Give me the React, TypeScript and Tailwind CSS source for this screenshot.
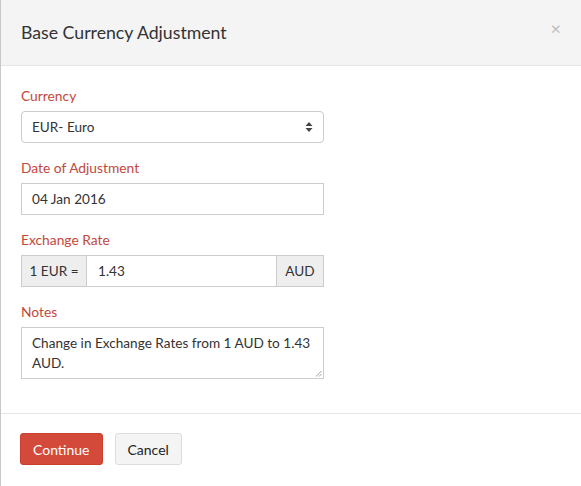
import React from 'react';

const labelCls = "block text-[13.8px] leading-4 text-[#c4473d] mb-[7px]";
const boxCls = "h-[32px] w-[303px] border border-[#ccc] bg-white text-[13.6px] text-[#333] px-[10px] flex items-center";

const App: React.FC = () => {
  return (
    <div className="w-[581px] h-[486px] bg-white border-l border-[#c8c8c8] font-['Lato','Open_Sans',sans-serif] text-[#333] flex flex-col">
      <div className="h-[66px] bg-[#f4f4f4] border-b border-[#e5e5e5] flex items-center justify-between pl-[20px] pr-[20px]">
        <h4 className="text-[17.7px] text-[#333] pt-[1px]">Base Currency Adjustment</h4>
        <span className="text-[18px] text-[#bbb] leading-none -mt-[9px]">×</span>
      </div>

      <div className="pl-[20px] pt-[22px] h-[348px] border-b border-[#e5e5e5] flex flex-col">
        <div>
          <label className={labelCls}>Currency</label>
          <div className={`${boxCls} rounded-[4px] justify-between`}>
            <span>EUR- Euro</span>
            <svg width="8" height="12" viewBox="0 0 8 12" className="text-[#444]">
              <path d="M4 1 L7.5 5 H0.5 Z" fill="currentColor" />
              <path d="M4 11 L7.5 7 H0.5 Z" fill="currentColor" />
            </svg>
          </div>
        </div>

        <div className="mt-[17px]">
          <label className={labelCls}>Date of Adjustment</label>
          <div className={boxCls}>04 Jan 2016</div>
        </div>

        <div className="mt-[17px]">
          <label className={labelCls}>Exchange Rate</label>
          <div className="flex h-[32px] w-[303px] border border-[#ccc] text-[13.6px]">
            <div className="w-[65px] bg-[#eee] border-r border-[#ccc] flex items-center justify-center">1 EUR =</div>
            <div className="flex-1 bg-white flex items-center px-[11px]">1.43</div>
            <div className="w-[47px] bg-[#eee] border-l border-[#ccc] flex items-center justify-center">AUD</div>
          </div>
        </div>

        <div className="mt-[17px]">
          <label className={labelCls}>Notes</label>
          <div className="relative w-[303px] h-[52px] border border-[#ccc] bg-white text-[13.6px] leading-[20px] px-[10px] py-[5px]">
            Change in Exchange Rates from 1 AUD to 1.43 AUD.
            <svg width="7" height="7" viewBox="0 0 7 7" className="absolute right-[1px] bottom-[1px] text-[#888]">
              <path d="M6.5 1 L1 6.5 M6.5 4 L4 6.5" stroke="currentColor" strokeWidth="0.8" />
            </svg>
          </div>
        </div>
      </div>

      <div className="pl-[19px] pt-[19px] flex gap-[12px]">
        <button className="h-[32px] px-[12px] rounded-[3px] bg-[#d44a3a] border border-[#c9402f] text-white text-[14px]">Continue</button>
        <button className="h-[32px] px-[12px] rounded-[3px] bg-[#f4f4f4] border border-[#ddd] text-[#222] text-[14px]">Cancel</button>
      </div>
    </div>
  );
};

export default App;
